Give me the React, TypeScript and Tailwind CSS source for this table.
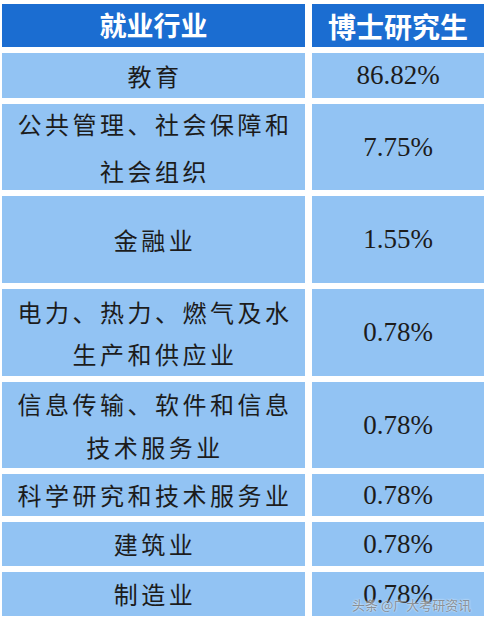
import React from "react";

const rows = [
  { name: ["教育"], value: "86.82%", h: "h-[45px]", lead: "leading-[44px]" },
  { name: ["公共管理、社会保障和", "社会组织"], value: "7.75%", h: "h-[86px]", lead: "leading-[47px]" },
  { name: ["金融业"], value: "1.55%", h: "h-[87px]", lead: "leading-[44px]" },
  { name: ["电力、热力、燃气及水", "生产和供应业"], value: "0.78%", h: "h-[87px]", lead: "leading-[42px]" },
  { name: ["信息传输、软件和信息", "技术服务业"], value: "0.78%", h: "h-[86px]", lead: "leading-[43px]" },
  { name: ["科学研究和技术服务业"], value: "0.78%", h: "h-[42px]", lead: "leading-[42px]" },
  { name: ["建筑业"], value: "0.78%", h: "h-[44px]", lead: "leading-[44px]" },
  { name: ["制造业"], value: "0.78%", h: "h-[44px]", lead: "leading-[44px]" },
];

const cjk = "font-['Noto_Sans_CJK_SC','Noto_Sans',sans-serif]";

export default function App() {
  return (
    <div className="relative w-[488px] h-[624px] bg-white overflow-hidden">
      <div className="grid grid-cols-[303px_172px] gap-x-[7px] gap-y-[6px] pl-[2px] pt-[4px]">
        {/* header */}
        <div className={`h-[43px] bg-[#1b6dd1] flex items-center justify-center text-white font-bold text-[27px] ${cjk}`}>
          就业行业
        </div>
        <div className={`h-[43px] bg-[#1b6dd1] flex items-center justify-center text-white font-bold text-[28px] ${cjk}`}>
          博士研究生
        </div>

        {rows.map((r, i) => (
          <React.Fragment key={i}>
            <div className={`${r.h} bg-[#92c3f3] flex flex-col items-center justify-center text-[#1c1c1c] text-[24px] tracking-[3.5px] pl-[3px] ${r.lead} ${cjk}`}>
              {r.name.map((line, j) => (
                <span key={j} className="whitespace-nowrap">{line}</span>
              ))}
            </div>
            <div className={`${r.h} bg-[#92c3f3] flex items-center justify-center text-[#1c1c1c] text-[27px] font-['Liberation_Serif',serif]`}>
              {r.value}
            </div>
          </React.Fragment>
        ))}
      </div>

      {/* watermark */}
      <div className={`absolute left-[352px] top-[598px] text-[13px] leading-[14px] text-[#6b6b6b]/70 whitespace-nowrap [text-shadow:0_0_2px_#ffffff] ${cjk}`}>
        头条 @广大考研资讯
      </div>
    </div>
  );
}
